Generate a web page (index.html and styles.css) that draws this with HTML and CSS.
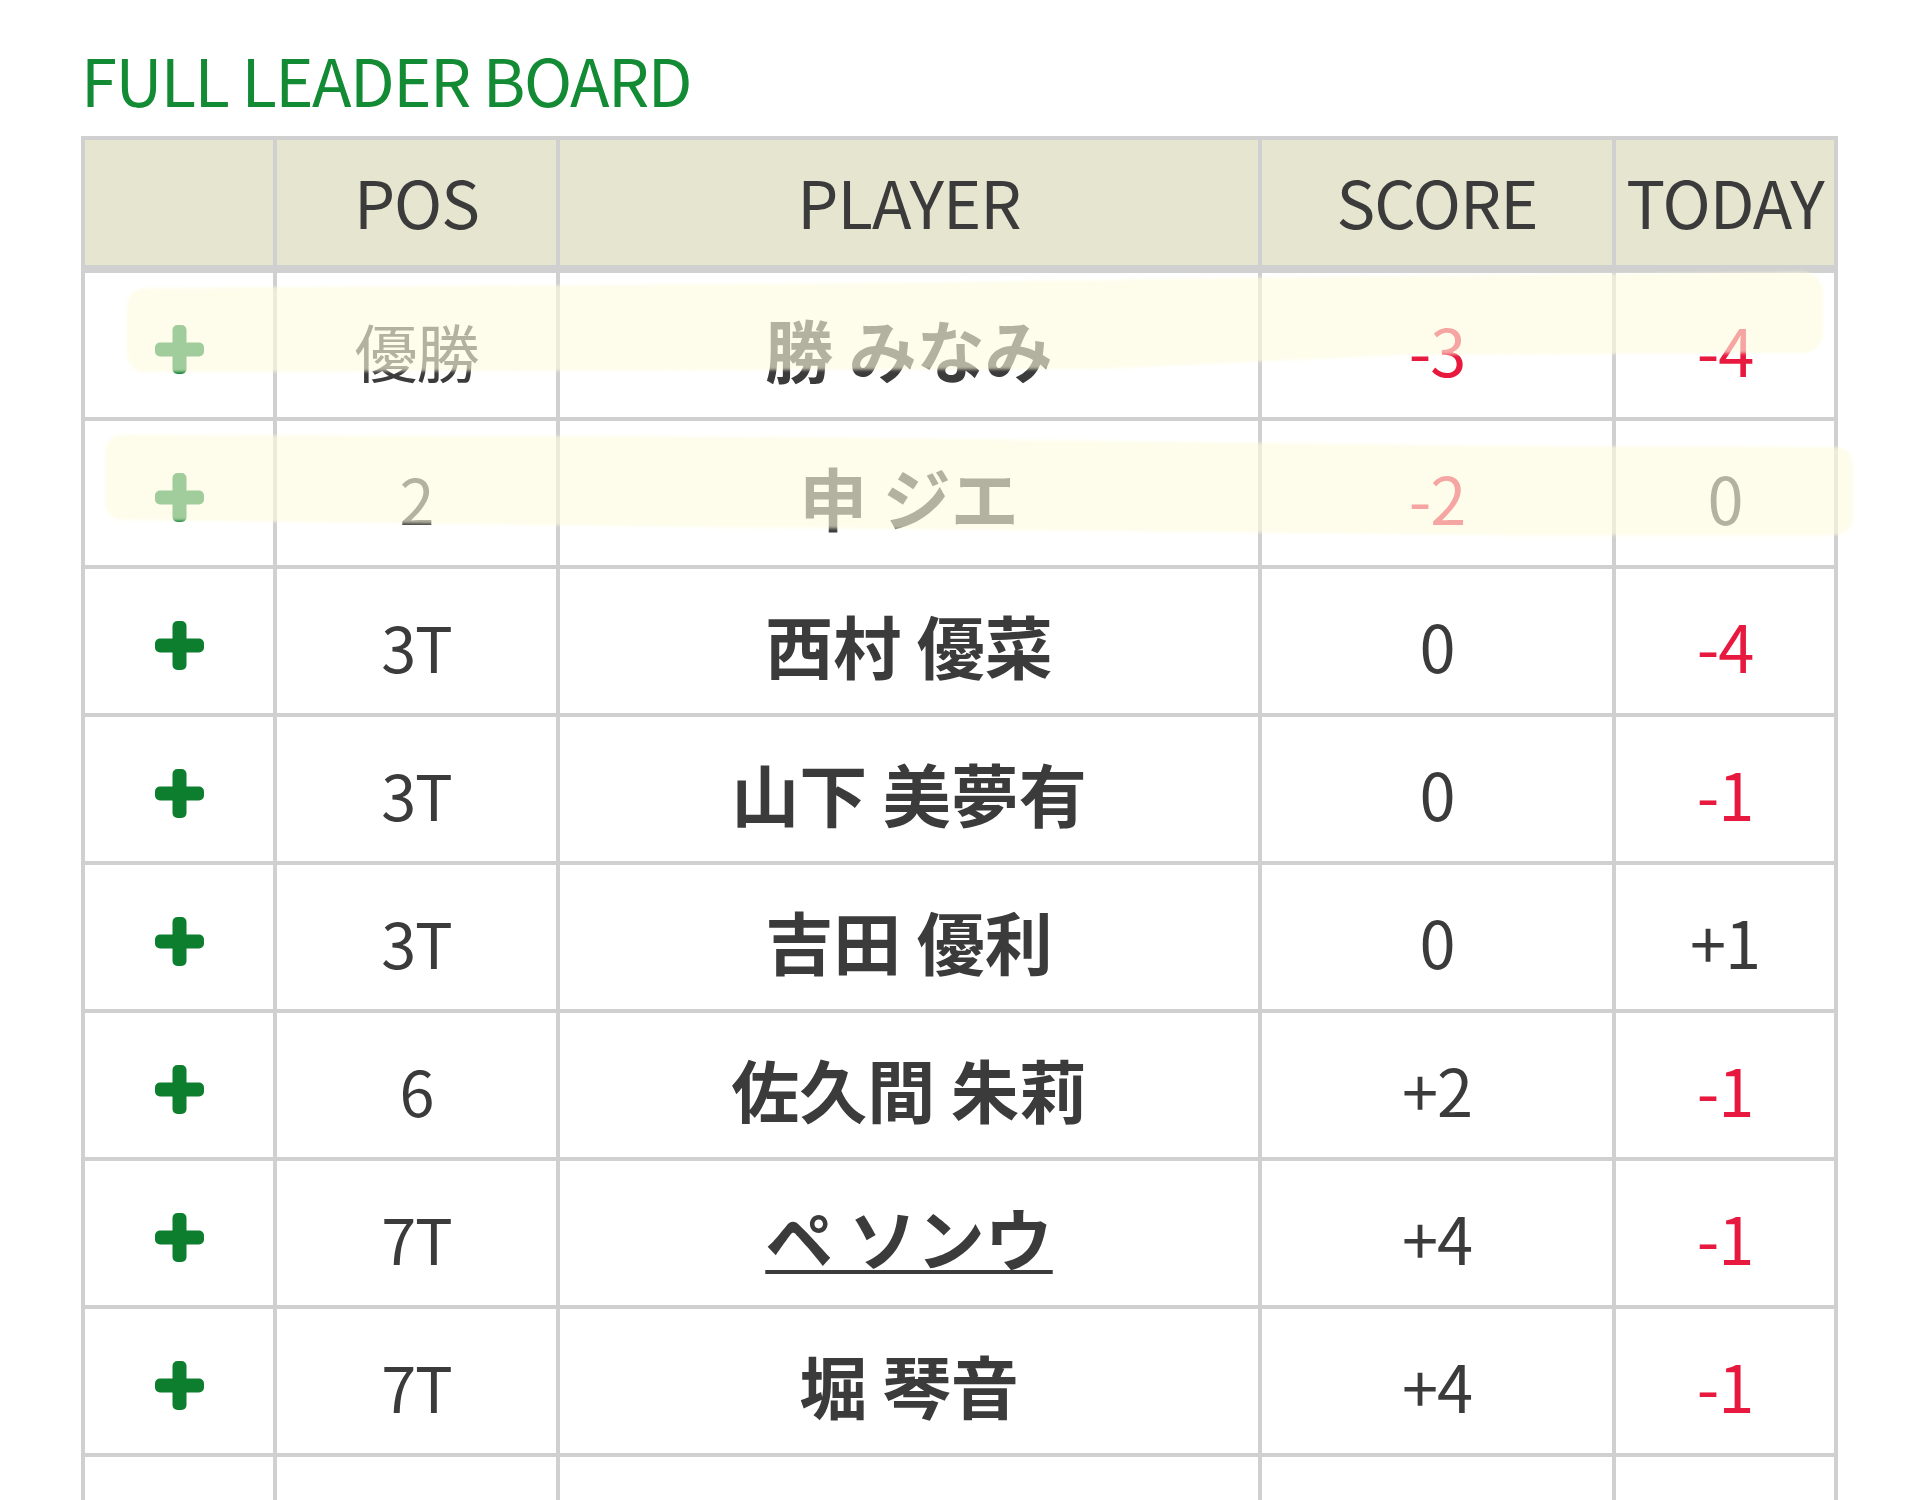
FILE: index.html
```html
<!DOCTYPE html>
<html lang="ja">
<head>
<meta charset="utf-8">
<title>Full Leader Board</title>
<link rel="stylesheet" href="styles.css">
</head>
<body>
<div class="page">
  <h1 class="title">FULL LEADER BOARD</h1>
  <div class="board-wrap">
    <div class="board">
      <div class="cell head"></div>
      <div class="cell head">POS</div>
      <div class="cell head">PLAYER</div>
      <div class="cell head">SCORE</div>
      <div class="cell head">TODAY</div>

      <div class="cell"><svg class="plus" viewBox="0 0 49 49"><rect x="17.5" y="0" width="14" height="49" rx="5"/><rect x="0" y="17.5" width="49" height="14" rx="5"/></svg></div>
      <div class="cell pos">優勝</div>
      <div class="cell name">勝 みなみ</div>
      <div class="cell num red">-3</div>
      <div class="cell num red">-4</div>

      <div class="cell"><svg class="plus" viewBox="0 0 49 49"><rect x="17.5" y="0" width="14" height="49" rx="5"/><rect x="0" y="17.5" width="49" height="14" rx="5"/></svg></div>
      <div class="cell pos">2</div>
      <div class="cell name">申 ジエ</div>
      <div class="cell num red">-2</div>
      <div class="cell num">0</div>

      <div class="cell"><svg class="plus" viewBox="0 0 49 49"><rect x="17.5" y="0" width="14" height="49" rx="5"/><rect x="0" y="17.5" width="49" height="14" rx="5"/></svg></div>
      <div class="cell pos">3T</div>
      <div class="cell name">西村 優菜</div>
      <div class="cell num">0</div>
      <div class="cell num red">-4</div>

      <div class="cell"><svg class="plus" viewBox="0 0 49 49"><rect x="17.5" y="0" width="14" height="49" rx="5"/><rect x="0" y="17.5" width="49" height="14" rx="5"/></svg></div>
      <div class="cell pos">3T</div>
      <div class="cell name">山下 美夢有</div>
      <div class="cell num">0</div>
      <div class="cell num red">-1</div>

      <div class="cell"><svg class="plus" viewBox="0 0 49 49"><rect x="17.5" y="0" width="14" height="49" rx="5"/><rect x="0" y="17.5" width="49" height="14" rx="5"/></svg></div>
      <div class="cell pos">3T</div>
      <div class="cell name">吉田 優利</div>
      <div class="cell num">0</div>
      <div class="cell num">+1</div>

      <div class="cell"><svg class="plus" viewBox="0 0 49 49"><rect x="17.5" y="0" width="14" height="49" rx="5"/><rect x="0" y="17.5" width="49" height="14" rx="5"/></svg></div>
      <div class="cell pos">6</div>
      <div class="cell name">佐久間 朱莉</div>
      <div class="cell num">+2</div>
      <div class="cell num red">-1</div>

      <div class="cell"><svg class="plus" viewBox="0 0 49 49"><rect x="17.5" y="0" width="14" height="49" rx="5"/><rect x="0" y="17.5" width="49" height="14" rx="5"/></svg></div>
      <div class="cell pos">7T</div>
      <div class="cell name"><a class="link" href="#">ペ ソンウ</a></div>
      <div class="cell num">+4</div>
      <div class="cell num red">-1</div>

      <div class="cell"><svg class="plus" viewBox="0 0 49 49"><rect x="17.5" y="0" width="14" height="49" rx="5"/><rect x="0" y="17.5" width="49" height="14" rx="5"/></svg></div>
      <div class="cell pos">7T</div>
      <div class="cell name">堀 琴音</div>
      <div class="cell num">+4</div>
      <div class="cell num red">-1</div>

      <div class="cell"></div>
      <div class="cell"></div>
      <div class="cell"></div>
      <div class="cell"></div>
      <div class="cell"></div>
    </div>
    <svg class="markers" viewBox="0 0 1800 420" width="1800" height="420">
      <path d="M66,152 L819,147 L1219,141 L1719,136 Q1742,136 1742,158 L1742,195 Q1742,217 1719,217 L1319,219 L1019,233 L66,236 Q46,236 46,216 L46,172 Q46,152 66,152 Z"/>
      <path d="M44,299 L719,301 L1419,310 L1752,311 Q1772,311 1772,331 L1772,379 Q1772,399 1752,399 L1419,399 L719,392 L44,384 Q24,384 24,364 L24,319 Q24,299 44,299 Z"/>
    </svg>
  </div>
</div>
</body>
</html>
```

FILE: styles.css
```css
html, body {
  margin: 0;
  padding: 0;
  background: #ffffff;
  height: 1500px;
  overflow: hidden;
}

.page {
  padding: 31px 0 0 81px;
  font-family: "Noto Sans CJK JP", "Noto Sans", sans-serif;
  color: #3b3b3b;
}

.title {
  margin: 0;
  height: 105px;
  font-size: 65px;
  line-height: 96px;
  font-weight: 400;
  color: #138a34;
  letter-spacing: -1.5px;
}

.board-wrap {
  position: relative;
  width: max-content;
}

.board {
  display: grid;
  grid-template-columns: 188px 279px 698px 350px 218px;
  grid-template-rows: 129px;
  grid-auto-rows: 144px;
  gap: 4px;
  background: #d0d0d0;
  border: 4px solid #d0d0d0;
  width: max-content;
}

.cell {
  background: #ffffff;
  display: flex;
  align-items: center;
  justify-content: center;
  font-size: 65px;
  line-height: 1;
  letter-spacing: -1px;
  padding-top: 8px;
  box-sizing: border-box;
}

.head {
  height: 125px;
  margin-bottom: 4px;
  background: #e6e5cf;
  padding-top: 0;
  padding-bottom: 2px;
}

.pos {
  font-size: 63px;
}

.name {
  font-size: 68px;
  font-weight: 700;
  letter-spacing: 0;
}

.red {
  color: #e8193f;
}

.link {
  color: inherit;
  text-decoration: underline;
  text-decoration-thickness: 4px;
  text-underline-offset: 4px;
}

.plus {
  width: 49px;
  height: 49px;
  fill: #0c7e2e;
}

.markers {
  position: absolute;
  left: 0;
  top: 0;
  overflow: visible;
  pointer-events: none;
  fill: rgba(253, 252, 222, 0.62);
  filter: blur(1.5px);
}
```
